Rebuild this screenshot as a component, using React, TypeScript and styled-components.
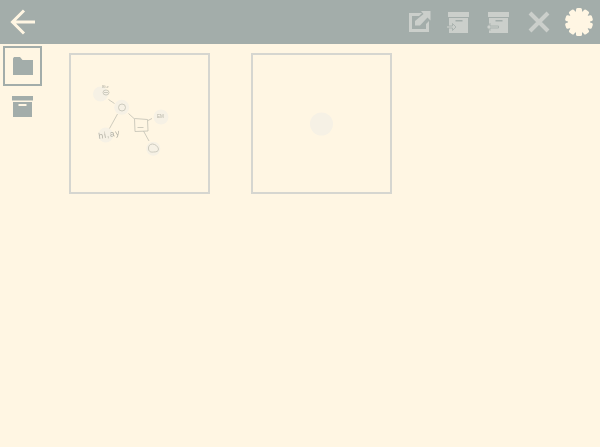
import React from "react";
import styled, { createGlobalStyle } from "styled-components";

const GlobalStyle = createGlobalStyle`
  html, body {
    margin: 0;
    padding: 0;
    height: 100%;
    background: #fff6e3;
    font-family: "Liberation Sans", Arial, sans-serif;
    overflow: hidden;
  }
`;

const Page = styled.div`
  width: 600px;
  height: 447px;
  display: flex;
  flex-direction: column;
  background: #fff6e3;
`;

const Toolbar = styled.header`
  height: 44px;
  flex: none;
  display: flex;
  align-items: center;
  justify-content: space-between;
  background: #a3adaa;
`;

const ToolGroup = styled.div`
  display: flex;
  align-items: center;
  gap: 10px;
  padding-right: 6px;
`;

const ToolButton = styled.button`
  width: 30px;
  height: 44px;
  padding: 0;
  border: 0;
  background: none;
  display: flex;
  align-items: center;
  justify-content: center;
  color: #cbcfcb;

  svg {
    filter: blur(0.3px);
  }
`;

const BackButton = styled(ToolButton)`
  width: 44px;
  color: #fff6e3;
`;

const Body = styled.main`
  flex: 1;
  display: flex;
`;

const Sidebar = styled.nav`
  width: 69px;
  flex: none;
  display: flex;
  flex-direction: column;
  padding: 2px 0 0 3px;
  box-sizing: border-box;
`;

const SideButton = styled.button<{ $active?: boolean }>`
  width: 39px;
  height: 40px;
  padding: 0;
  box-sizing: border-box;
  background: none;
  border: 2px solid ${(p) => (p.$active ? "#a3adaa" : "transparent")};
  display: flex;
  align-items: center;
  justify-content: center;
  color: #a3adaa;
`;

const Tiles = styled.section`
  display: flex;
  align-items: flex-start;
  gap: 41px;
  padding-top: 9px;
`;

const Tile = styled.div`
  width: 141px;
  height: 141px;
  box-sizing: border-box;
  border: 2px solid #d6d6d0;
  display: flex;
  align-items: center;
  justify-content: center;
`;

const Thumb = styled.svg`
  display: block;
  width: 137px;
  height: 137px;
  filter: blur(0.5px);
`;

const Dot = styled.circle`
  fill: #f6f1e5;
`;

const Ink = styled.g`
  fill: none;
  stroke: #c2c0b4;
  stroke-width: 0.8;
`;

const Scrawl = styled.text`
  fill: #b4b2a6;
  font-family: "Liberation Sans", Arial, sans-serif;
`;

const ArrowLeft = () => (
  <svg width="30" height="30" viewBox="0 0 30 30" fill="none" stroke="currentColor" strokeWidth="3">
    <path d="M5 15h23M17 3.500 5.500 15 17 26.500" />
  </svg>
);

const ExportIcon = () => (
  <svg width="24" height="24" viewBox="0 0 24 24" fill="currentColor">
    <path d="M2 3h13l-3 3H5v13h14v-5l3-3v11H2z" />
    <path d="M14 1h9.500v9.500l-3-3L13 15.500H8V11L16.500 4z" />
  </svg>
);

// archive box with an arrow going in or out of the left side
const BoxArrowIcon = ({ out }: { out?: boolean }) => (
  <svg width="24" height="24" viewBox="1.500 0 24 24" fill="currentColor">
    <rect x="2.500" y="2" width="21" height="5" />
    <rect x="3.500" y="8" width="19" height="15" />
    <rect x="10" y="10" width="7" height="1.500" fill="#a3adaa" />
    <path
      stroke="#a3adaa"
      strokeWidth="0.8"
      d={out ? "M1 17l3.500-3.500V16H13v2H4.500v2.500z" : "M1 16h6v-2.500l3.500 3.500-3.500 3.500V18H1z"}
    />
  </svg>
);

const CloseIcon = () => (
  <svg width="24" height="24" viewBox="0 0 24 24" fill="none" stroke="currentColor" strokeWidth="4">
    <path d="M3 3l18 18M21 3 3 21" />
  </svg>
);

const GearIcon = () => {
  const teeth = Array.from({ length: 10 }, (_, i) => (i * 360) / 10);
  return (
    <svg width="30" height="30" viewBox="0 0 30 30" fill="#fff6e3">
      <circle cx="15" cy="15" r="11" />
      {teeth.map((a) => (
        <rect key={a} x="12" y="1" width="6" height="8" rx="1.500" transform={`rotate(${a} 15 15)`} />
      ))}
    </svg>
  );
};

const FolderIcon = () => (
  <svg width="20" height="18" viewBox="0 0 20 18" fill="currentColor">
    <path d="M0 1.500 1 0h6l2.500 3H20v15H0z" />
  </svg>
);

const ArchiveIcon = () => (
  <svg width="22" height="21" viewBox="0 0 22 21" fill="currentColor">
    <rect width="21" height="4.500" />
    <path fillRule="evenodd" d="M1 6h19v15H1zM6.500 8v2h8V8z" />
  </svg>
);

const MapThumb = () => (
  <Thumb viewBox="71 55 137 137">
    <Dot cx="100.500" cy="94" r="7.500" />
    <Dot cx="121.700" cy="107.300" r="7.500" />
    <Dot cx="161" cy="117" r="7.500" />
    <Dot cx="153.300" cy="148.700" r="7" />
    <Dot cx="105.700" cy="135" r="7.500" />
    <Ink>
      <path d="M108.500 99.500 114.500 103.500M117.500 114 109.500 128.500M128.500 113.500 134 118.500M148 120.500 152 118.500M143.500 131 149 141" />
      <path d="M134.500 118.500 147.500 119.500 148 131 135 131.500z" />
      <path d="M137.500 127.500h6" />
      <circle cx="122" cy="107.500" r="3.500" />
      <ellipse cx="106" cy="92.500" rx="3" ry="2.500" />
      <path d="M104 92.500h4M148.500 149c-.5-3 1.500-5 4-5 3 .2 5.500 2.500 6 5 .2 2.500-2.500 3-5 3-2.500.3-4.500 0-5-3z" />
    </Ink>
    <Scrawl x="102" y="88" fontSize="3.800">Blur</Scrawl>
    <Scrawl x="99" y="139" fontSize="8.500" transform="rotate(-10 99 139)" letterSpacing="0.800">hi,ay</Scrawl>
    <Scrawl x="157" y="117.500" fontSize="4.500">EM</Scrawl>
  </Thumb>
);

const EmptyThumb = () => (
  <Thumb viewBox="0 0 137 137">
    <Dot cx="68.500" cy="69" r="11.500" />
  </Thumb>
);

export default function App() {
  return (
    <Page>
      <GlobalStyle />
      <Toolbar>
        <BackButton aria-label="Back">
          <ArrowLeft />
        </BackButton>
        <ToolGroup>
          <ToolButton aria-label="Export">
            <ExportIcon />
          </ToolButton>
          <ToolButton aria-label="Move to archive">
            <BoxArrowIcon />
          </ToolButton>
          <ToolButton aria-label="Move from archive">
            <BoxArrowIcon out />
          </ToolButton>
          <ToolButton aria-label="Delete">
            <CloseIcon />
          </ToolButton>
          <ToolButton aria-label="Settings">
            <GearIcon />
          </ToolButton>
        </ToolGroup>
      </Toolbar>
      <Body>
        <Sidebar>
          <SideButton $active aria-label="Maps">
            <FolderIcon />
          </SideButton>
          <SideButton aria-label="Archive">
            <ArchiveIcon />
          </SideButton>
        </Sidebar>
        <Tiles>
          <Tile>
            <MapThumb />
          </Tile>
          <Tile>
            <EmptyThumb />
          </Tile>
        </Tiles>
      </Body>
    </Page>
  );
}
